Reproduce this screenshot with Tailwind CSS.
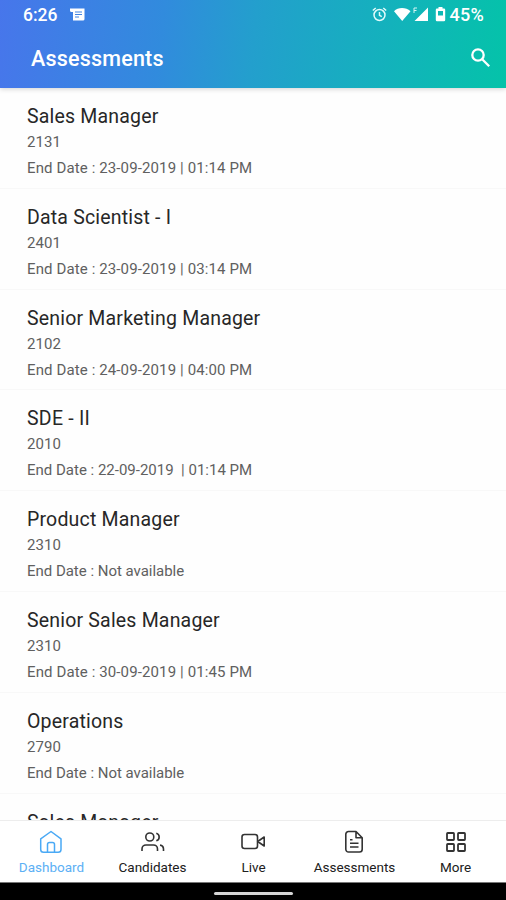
<!DOCTYPE html>
<html lang="en">
<head>
<meta charset="utf-8">
<title>Assessments</title>
<script src="https://cdn.jsdelivr.net/npm/@tailwindcss/browser@4"></script>
</head>
<body class="bg-black">
<div class="flex h-[900px] w-[506px] flex-col overflow-hidden bg-white font-['Roboto',sans-serif]">
  <header class="z-10 h-[88px] shrink-0 bg-linear-[96deg,#4776eb_0%,#318bdd_32%,#239fcd_50%,#14b1bd_75%,#04c3a9_100%] text-white shadow-[0_1px_5px_rgba(0,0,0,0.18)]">
    <div class="flex h-[30px] items-center pl-[23px] pr-[22px]">
      <span class="text-[17.5px] font-medium leading-[30px]">6:26</span>
      <svg class="ml-[13px] h-[13px] w-[15px] -mt-[2px]" viewBox="0 0 15 13"><path fill="#fff" d="M0 .5h14.500v10.500a1.500 1.500 0 0 1-1.500 1.500H3V4H1.500A1.500 1.500 0 0 1 0 2.500z"/><path stroke="#4385e2" d="M5 4h7M5 6.500h7M5 9h4"/></svg>
      <svg class="ml-auto -mt-[2px] h-[15px] w-[15px]" viewBox="0 0 15 15" fill="none" stroke="#e1fbfb" stroke-width="1.500"><circle cx="7.500" cy="8" r="5.500"/><path d="M7.500 5v3.300l2.300 1.400M.8 3.500 3.700 1M14.200 3.500 11.300 1"/></svg>
      <svg class="ml-[7px] -mt-[2px] h-[15px] w-[34px]" viewBox="0 0 34 15"><path fill="#fff" d="M0 4.200C4-.1 12-.1 16.500 4.200L8.200 14zM34 .5V14H20.500z"/><path fill="none" stroke="#d5f5f4" d="M23 1h-3v5M20 3.500h2.500"/></svg>
      <svg class="ml-[7px] -mt-[1px] h-[15px] w-[11px]" viewBox="0 0 11 15"><path fill="#fff" fill-rule="evenodd" d="M3.500 0h4v1.500H9a1.200 1.200 0 0 1 1.200 1.200V13A1.200 1.200 0 0 1 9 14.200H2A1.200 1.200 0 0 1 .8 13V2.700A1.200 1.200 0 0 1 2 1.500h1.500zM3 4v4.500h5V4z"/></svg>
      <span class="ml-[3px] text-[18px] font-medium leading-[30px] tracking-[0.3px]">45%</span>
    </div>
    <div class="flex h-[58px] items-center justify-between pl-[31px] pr-[15px]">
      <h1 class="text-[21.5px] font-medium leading-[26px] tracking-[0.2px]">Assessments</h1>
      <svg class="-mt-[3px] h-[21px] w-[21px]" viewBox="0 0 21 21" fill="none" stroke="#fff" stroke-width="2.300"><circle cx="8" cy="8" r="5.700"/><path d="m12.200 12.200 7 7"/></svg>
    </div>
  </header>
  <main class="min-h-0 flex-1 overflow-hidden bg-[#fefefe] text-[#606060]">
    <article class="h-[100.8px] border-b border-[#f8f8f8] pl-[27px] pt-[16px]"><h2 class="text-[19.5px] leading-[25px] tracking-[0.19px] text-[#272727]">Sales Manager</h2><p class="text-[15px] leading-[26px] tracking-[0.1px]">2131</p><p class="text-[15px] leading-[26px] tracking-[0.12px] whitespace-pre">End Date : 23-09-2019 | 01:14 PM</p></article>
    <article class="h-[100.8px] border-b border-[#f8f8f8] pl-[27px] pt-[16px]"><h2 class="text-[19.5px] leading-[25px] tracking-[0.19px] text-[#272727]">Data Scientist - I</h2><p class="text-[15px] leading-[26px] tracking-[0.1px]">2401</p><p class="text-[15px] leading-[26px] tracking-[0.12px] whitespace-pre">End Date : 23-09-2019 | 03:14 PM</p></article>
    <article class="h-[100.8px] border-b border-[#f8f8f8] pl-[27px] pt-[16px]"><h2 class="text-[19.5px] leading-[25px] tracking-[0.19px] text-[#272727]">Senior Marketing Manager</h2><p class="text-[15px] leading-[26px] tracking-[0.1px]">2102</p><p class="text-[15px] leading-[26px] tracking-[0.12px] whitespace-pre">End Date : 24-09-2019 | 04:00 PM</p></article>
    <article class="h-[100.8px] border-b border-[#f8f8f8] pl-[27px] pt-[16px]"><h2 class="text-[19.5px] leading-[25px] tracking-[0.25px] text-[#272727]">SDE - II</h2><p class="text-[15px] leading-[26px] tracking-[0.1px]">2010</p><p class="text-[15px] leading-[26px] whitespace-pre">End Date : 22-09-2019  | 01:14 PM</p></article>
    <article class="h-[100.8px] border-b border-[#f8f8f8] pl-[27px] pt-[16px]"><h2 class="text-[19.5px] leading-[25px] tracking-[0.19px] text-[#272727]">Product Manager</h2><p class="text-[15px] leading-[26px] tracking-[0.1px]">2310</p><p class="text-[15px] leading-[26px] tracking-[-0.02px] whitespace-pre">End Date : Not available</p></article>
    <article class="h-[100.8px] border-b border-[#f8f8f8] pl-[27px] pt-[16px]"><h2 class="text-[19.5px] leading-[25px] tracking-[0.19px] text-[#272727]">Senior Sales Manager</h2><p class="text-[15px] leading-[26px] tracking-[0.1px]">2310</p><p class="text-[15px] leading-[26px] tracking-[0.12px] whitespace-pre">End Date : 30-09-2019 | 01:45 PM</p></article>
    <article class="h-[100.8px] border-b border-[#f8f8f8] pl-[27px] pt-[16px]"><h2 class="text-[19.5px] leading-[25px] tracking-[0.19px] text-[#272727]">Operations</h2><p class="text-[15px] leading-[26px] tracking-[0.1px]">2790</p><p class="text-[15px] leading-[26px] tracking-[-0.02px] whitespace-pre">End Date : Not available</p></article>
    <article class="h-[100.8px] pl-[27px] pt-[16px]"><h2 class="text-[19.5px] leading-[25px] tracking-[0.19px] text-[#272727]">Sales Manager</h2></article>
  </main>
  <nav class="grid h-[62px] shrink-0 grid-cols-5 border-t border-[#ededed] bg-white pl-[1px] pt-[8px] text-[13.5px] leading-[18px] text-[#202020]">
    <a class="flex flex-col items-center gap-[4px] text-[#5cb0f5]"><svg class="mr-[2px] h-[25px] w-[26px]" viewBox="0 0 26 25" fill="none" stroke="#4aa9f5" stroke-width="1.500" stroke-linejoin="round"><path d="M2.700 9.800 13 2.500l10 7.300v10.700a2.800 2.800 0 0 1-2.800 2.800H5.500a2.800 2.800 0 0 1-2.800-2.800zM9.500 23.300V15.500q0-2 2-2h3q2 0 2 2v7.800"/></svg>Dashboard</a>
    <a class="flex flex-col items-center gap-[4px]"><svg class="h-[25px] w-[26px]" viewBox="0 0 26 25" fill="none" stroke="#333" stroke-width="1.600"><circle cx="9.800" cy="8" r="4"/><path d="M2 22v-2a4 4 0 0 1 4-4h7.500a4 4 0 0 1 4 4v2M16.300 4.200a3.950 3.950 0 0 1 0 7.600M23.500 22v-2a4 4 0 0 0-3.500-3.900"/></svg>Candidates</a>
    <a class="flex flex-col items-center gap-[4px]"><svg class="mr-[2px] h-[25px] w-[26px]" viewBox="0 0 26 25" fill="none" stroke="#333" stroke-width="1.600" stroke-linejoin="round"><rect x="2" y="5.500" width="15.500" height="14" rx="2.500"/><path d="m24.200 8-6.500 4.500 6.500 4.500z"/></svg>Live</a>
    <a class="flex flex-col items-center gap-[4px]"><svg class="mr-[1px] h-[25px] w-[26px]" viewBox="0 0 26 25" fill="none" stroke="#333" stroke-width="1.600" stroke-linejoin="round"><path d="M15 2.500H7.500A2.700 2.700 0 0 0 4.800 5.300v15a2.700 2.700 0 0 0 2.700 2.700h11a2.700 2.700 0 0 0 2.700-2.700V8.700zv6.200h6.200M9 10.800h2.500M9 14.300h8.500M9 18h8.500"/></svg>Assessments</a>
    <a class="flex flex-col items-center gap-[4px]"><svg class="h-[25px] w-[26px]" viewBox="0 0 26 25" fill="none" stroke="#333" stroke-width="1.800"><rect x="4" y="4" width="7" height="7" rx=".7"/><rect x="15" y="4" width="7" height="7" rx=".7"/><rect x="4" y="15" width="7" height="7" rx=".7"/><rect x="15" y="15" width="7" height="7" rx=".7"/></svg>More</a>
  </nav>
  <div class="flex h-[18px] shrink-0 justify-center border-t border-[#777] bg-black pt-[9px]"><div class="h-[3px] w-[79px] rounded-full bg-[#d5d5d5]"></div></div>
</div>
</body>
</html>
